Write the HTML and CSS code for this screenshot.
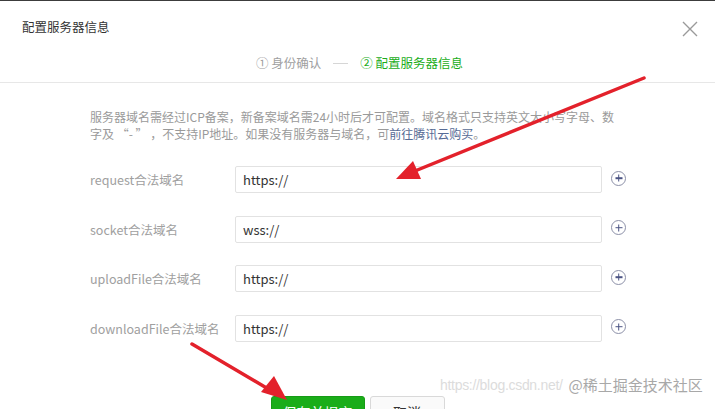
FILE: index.html
```html
<!DOCTYPE html>
<html lang="zh-CN">
<head>
    <meta charset="UTF-8">
    <title>配置服务器信息</title>
    <link rel="stylesheet" href="styles.css">
</head>
<body>
    <div class="dialog">
        <div class="dialog-hd">
            <div class="hd-top">
                <h3 class="title">配置服务器信息</h3>
                <span class="close">
                    <svg width="16" height="16" viewBox="0 0 16 16"><path d="M1 1L15 15M15 1L1 15" stroke="#9a9a9a" stroke-width="1.4" fill="none"/></svg>
                </span>
            </div>
            <div class="steps">
                <span class="step">① 身份确认</span>
                <span class="step-line"></span>
                <span class="step cur">② 配置服务器信息</span>
            </div>
        </div>
        <div class="dialog-bd">
            <p class="desc">服务器域名需经过ICP备案，新备案域名需24小时后才可配置。域名格式只支持英文大小写字母、数<br>字及 “- ” ，不支持IP地址。如果没有服务器与域名，可<a href="#">前往腾讯云购买</a>。</p>
            <div class="form">
                <div class="row">
                    <label>request合法域名</label>
                    <input type="text" value="https://">
                    <span class="add"></span>
                </div>
                <div class="row">
                    <label>socket合法域名</label>
                    <input type="text" value="wss://">
                    <span class="add"></span>
                </div>
                <div class="row">
                    <label>uploadFile合法域名</label>
                    <input type="text" value="https://">
                    <span class="add"></span>
                </div>
                <div class="row">
                    <label>downloadFile合法域名</label>
                    <input type="text" value="https://">
                    <span class="add"></span>
                </div>
            </div>
            <div class="btns">
                <button class="btn btn-primary">保存并提交</button>
                <button class="btn btn-default">取消</button>
            </div>
        </div>
    </div>

    <div class="mark">
        <span class="mark-url">https://blog.csdn.net/</span>
        <span class="mark-name">@稀土掘金技术社区</span>
    </div>

    <svg class="arrows" width="715" height="409" viewBox="0 0 715 409">
        <line x1="644" y1="78" x2="410" y2="173" stroke="#e3212b" stroke-width="3.5" stroke-linecap="round"/>
        <polygon points="396,179 413,161 421,179" fill="#e3212b"/>
        <line x1="192" y1="344" x2="270" y2="390" stroke="#e3212b" stroke-width="3.5" stroke-linecap="round"/>
        <polygon points="287,400 261,392 274,376" fill="#e3212b"/>
    </svg>
</body>
</html>
```

FILE: styles.css
```css
body{
    margin:0;
    width:715px;
    height:409px;
    overflow:hidden;
    background:#fff;
    font-family:"Noto Sans CJK SC","Microsoft YaHei",sans-serif;
    color:#333;
    position:relative;
}
.dialog{
    border-top:1px solid #3c3c3c;
}
.dialog-hd{
    border-bottom:1px solid #e7e7e7;
    padding-bottom:9px;
}
.hd-top{
    display:flex;
    justify-content:space-between;
    align-items:center;
    padding:16px 17px 0 22px;
    height:20px;
}
.title{
    margin:0;
    font-size:12.5px;
    font-weight:normal;
    line-height:20px;
    color:#333;
}
.close{
    display:flex;
    margin-top:4px;
}
.steps{
    display:flex;
    justify-content:center;
    align-items:center;
    margin-top:16px;
    height:20px;
    font-size:12.5px;
    line-height:20px;
    color:#a0a0a0;
    padding-left:4px;
}
.step-line{
    width:15px;
    height:1px;
    background:#d6d6d6;
    margin:0 12px;
}
.step.cur{
    color:#1aad19;
}
.dialog-bd{
    padding:25px 0 0 90px;
}
.desc{
    margin:0;
    font-size:12px;
    line-height:17px;
    color:#9a9a9a;
}
.desc a{
    color:#576b95;
    text-decoration:none;
}
.form{
    margin-top:24px;
    display:flex;
    flex-direction:column;
    gap:22.5px;
}
.row{
    display:flex;
    align-items:center;
    height:27px;
}
.row label{
    width:145px;
    font-size:12.5px;
    color:#a0a0a0;
}
.row input{
    box-sizing:border-box;
    width:367px;
    height:27px;
    border:1px solid #e2e2e2;
    border-radius:2px;
    padding:0 7px;
    font-family:inherit;
    font-size:13px;
    color:#333;
    outline:none;
}
.add{
    position:relative;
    box-sizing:border-box;
    width:15px;
    height:15px;
    margin-left:9px;
    margin-top:-3px;
    border:1px solid #8c90a8;
    border-radius:50%;
}
.add::before,.add::after{
    content:"";
    position:absolute;
    background:#4c5484;
    left:50%;
    top:50%;
}
.add::before{
    width:7px;
    height:1.6px;
    transform:translate(-50%,-50%);
}
.add::after{
    width:1.6px;
    height:7px;
    transform:translate(-50%,-50%);
}
.btns{
    display:flex;
    justify-content:center;
    gap:5px;
    margin:54px 0 0 -90px;
}
.btn{
    height:32px;
    border-radius:3px;
    font-family:inherit;
    font-size:14px;
    padding:0;
}
.btn-primary{
    width:94px;
    background:#1aad19;
    border:1px solid #179b16;
    color:#fff;
}
.btn-default{
    width:75px;
    background:#fafafa;
    border:1px solid #d9d9d9;
    color:#333;
}
.mark{
    position:absolute;
    left:440px;
    top:374px;
    display:flex;
    align-items:center;
    font-size:14px;
}
.mark-url{
    font-family:"Liberation Sans",sans-serif;
    color:#dcdcdc;
    letter-spacing:-0.3px;
}
.mark-name{
    margin-left:6px;
    color:#a8a8a8;
    font-size:15px;
}
.arrows{
    position:absolute;
    left:0;
    top:0;
    pointer-events:none;
}
```
